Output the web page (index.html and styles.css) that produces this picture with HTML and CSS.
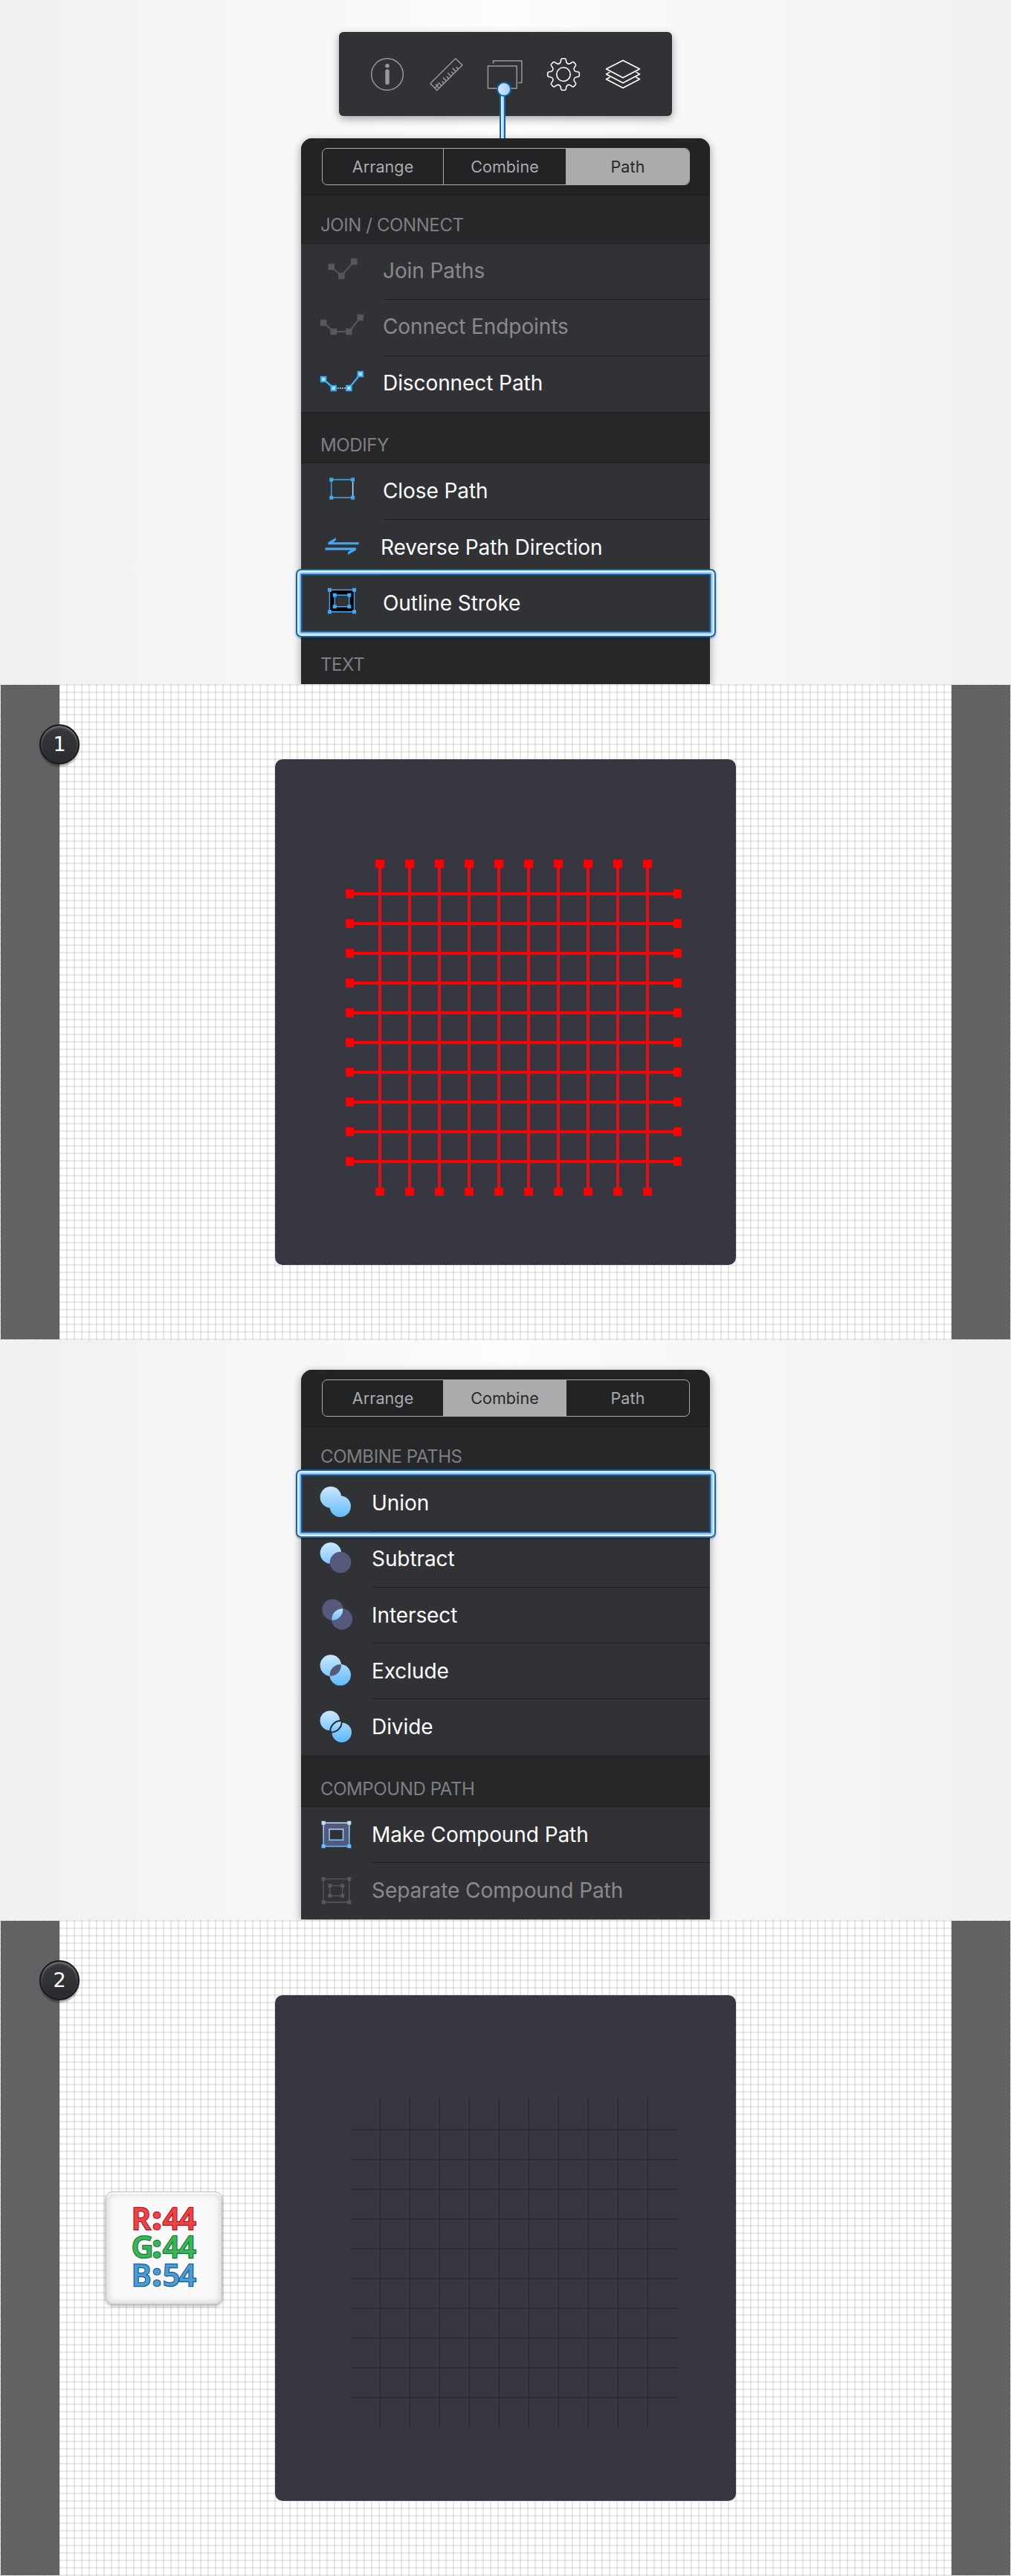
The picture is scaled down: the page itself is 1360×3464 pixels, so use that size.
FILE: index.html
```html
<!DOCTYPE html>
<html lang="en">
<head>
<meta charset="utf-8">
<title>Outline Stroke and Union</title>
<link rel="stylesheet" href="styles.css">
</head>
<body>
<svg class="defs" aria-hidden="true">
  <defs>
    <linearGradient id="sky" gradientUnits="userSpaceOnUse" x1="0" y1="15" x2="0" y2="56">
      <stop offset="0" stop-color="#cbe8ff"/><stop offset="1" stop-color="#62bbfb"/>
    </linearGradient>
    <linearGradient id="lens" gradientUnits="userSpaceOnUse" x1="0" y1="28" x2="0" y2="45">
      <stop offset="0" stop-color="#bfe4ff"/><stop offset="1" stop-color="#6bbffb"/>
    </linearGradient>
    <path id="tooth" d="M-5.930 -14.300Q-4.200 -15.200 -3.800 -17L-3.300 -19.800Q-3 -21.300 -1.800 -21.300H1.800Q3 -21.300 3.300 -19.800L3.800 -17Q4.200 -15.200 5.930 -14.300"/>
  </defs>
</svg>

<section class="stage stage-path">
  <div class="toolbar">
    <svg class="tool dim" viewBox="496.5 75.5 48 48">
      <circle cx="520.5" cy="99.5" r="21.3"/>
      <circle class="solid" cx="520.5" cy="88" r="2.8"/>
      <rect class="solid" x="517.8" y="92.8" width="5.4" height="20.4" rx="2"/>
    </svg>
    <svg class="tool dim" viewBox="575.8 75.5 48 48">
      <path d="M612.5 78.2L621.8 87L587.6 121L578.7 111.8Z"/>
      <path d="M585 117.500l4.500-5M588.500 115l-2.500-2.500M590.500 118l-2.800-2.800M593.800 114.800l-4.500-4.500M597 111.600l-2.800-2.800M600.200 108.400l-4.500-4.500M603.400 105.200l-2.800-2.800M606.600 102l-4.500-4.500M609.800 98.800l-2.800-2.800M613 95.600l-4.500-4.500M616.200 92.400l-2.800-2.800"/>
    </svg>
    <svg class="tool dim" viewBox="655.1 75.500 48 48">
      <path d="M656.500 88.300H695.300V118.200H656.500ZM663.500 85V81.200H702V110.700H697.300"/>
    </svg>
    <svg class="tool lit" viewBox="-24 -24 48 48">
      <circle r="9.200"/>
      <use href="#tooth"/><use href="#tooth" transform="rotate(45)"/><use href="#tooth" transform="rotate(90)"/><use href="#tooth" transform="rotate(135)"/><use href="#tooth" transform="rotate(180)"/><use href="#tooth" transform="rotate(225)"/><use href="#tooth" transform="rotate(270)"/><use href="#tooth" transform="rotate(315)"/>
    </svg>
    <svg class="tool lit" viewBox="813.500 75.500 48 48">
      <path d="M837.500 80.800L860 92.300L837.500 104L815 92.300Z"/>
      <path d="M820 96.400L815 99.200L837.500 111L860 99.200L855 96.400M820 103.300L815 106L837.500 117.800L860 106L855 103.300"/>
    </svg>
  </div>

  <div class="panel">
    <div class="tabbar"><div class="tabs">
      <span>Arrange</span><span>Combine</span><span class="on">Path</span>
    </div></div>
    <h2>JOIN / CONNECT</h2>
    <ul>
      <li class="off">
        <svg class="ico node-off" viewBox="0 0 110 75"><path d="M40.700 30.700L54.200 43L71.200 23.700"/><path class="dots" d="M36.500 26.500h8.500v8.500h-8.500zM50 38.800h8.500v8.500h-8.500zM67 19.500h8.500v8.500h-8.500z"/></svg>
        <span>Join Paths</span></li>
      <li class="off">
        <svg class="ico node-off" viewBox="0 0 110 75"><path d="M30.100 31L43.700 43H64.400L79.800 24"/><path class="dots" d="M25.900 26.800h8.500v8.500h-8.500zM39.500 38.800h8.500v8.500h-8.500zM60.200 38.800h8.500v8.500h-8.500zM75.500 19.800h8.500v8.500h-8.500z"/></svg>
        <span>Connect Endpoints</span></li>
      <li>
        <svg class="ico node-on" viewBox="0 0 110 75"><path d="M30.100 31L43.700 43M64.400 43L79.800 24"/><path class="gap" d="M49 43H60"/><path class="ends" d="M26.800 27.700h6.600v6.600h-6.600zM40.400 39.700h6.600v6.600h-6.600zM61.100 39.700h6.600v6.600h-6.600zM76.500 20.700h6.600v6.600h-6.600z"/></svg>
        <span>Disconnect Path</span></li>
    </ul>
    <h2 class="mid">MODIFY</h2>
    <ul class="low">
      <li>
        <svg class="ico box-on" viewBox="0 0 110 75"><path d="M40.700 22H69.600V46.300H40.700Z"/><path class="pale" d="M69.600 25V43.500"/><path class="dots" d="M38.200 19.500h5v5h-5zM67.100 19.500h5v5h-5zM38.200 43.800h5v5h-5zM67.100 43.800h5v5h-5z"/></svg>
        <span>Close Path</span></li>
      <li class="wide">
        <svg class="ico box-on" viewBox="0 0 110 75"><path class="dots" d="M36.500 30.200L46.800 24V27.500L43 30.200H77.500V33.300H36.500ZM74 40.700L63 47V43.500L67 40.700H32.400V37.600H74Z"/></svg>
        <span>Reverse Path Direction</span></li>
      <li>
        <svg class="ico box-on" viewBox="0 0 110 75"><path class="ring" fill-rule="evenodd" d="M38.400 19.300H71.500V48.700H38.400ZM45.200 26.300V41.700H64.800V26.300Z"/><path class="dots" d="M35.900 16.800h5v5h-5zM69 16.800h5v5h-5zM35.900 46.200h5v5h-5zM69 46.200h5v5h-5zM42.700 23.800h5v5h-5zM62.300 23.800h5v5h-5zM42.700 39.200h5v5h-5zM62.300 39.200h5v5h-5z"/></svg>
        <span>Outline Stroke</span></li>
    </ul>
    <h2 class="mid last">TEXT</h2>
    <div class="highlight"></div>
  </div>
  <div class="pin"></div>
</section>

<section class="canvas">
  <div class="margin"></div>
  <div class="paper">
    <div class="tile">
      <svg viewBox="370 1021 620 680">
        <path class="r-v" d="M511 1162V1602M551 1162V1602M591 1162V1602M631 1162V1602M671 1162V1602M711 1162V1602M751 1162V1602M791 1162V1602M831 1162V1602M871 1162V1602"/>
        <path class="r-h" d="M470 1202H912M470 1242H912M470 1282H912M470 1322H912M470 1362H912M470 1402H912M470 1442H912M470 1482H912M470 1522H912M470 1562H912"/>
        <path class="r-end-h" d="M465 1202H476M465 1242H476M465 1282H476M465 1322H476M465 1362H476M465 1402H476M465 1442H476M465 1482H476M465 1522H476M465 1562H476M906 1202H917M906 1242H917M906 1282H917M906 1322H917M906 1362H917M906 1402H917M906 1442H917M906 1482H917M906 1522H917M906 1562H917"/>
        <path class="r-end-h" d="M511 1156V1167M551 1156V1167M591 1156V1167M631 1156V1167M671 1156V1167M711 1156V1167M751 1156V1167M791 1156V1167M831 1156V1167M871 1156V1167M511 1597V1608M551 1597V1608M591 1597V1608M631 1597V1608M671 1597V1608M711 1597V1608M751 1597V1608M791 1597V1608M831 1597V1608M871 1597V1608"/>
      </svg>
    </div>
  </div>
  <div class="margin"></div>
  <div class="badge">1</div>
</section>

<section class="stage stage-combine">
  <div class="panel narrow">
    <div class="tabbar"><div class="tabs">
      <span>Arrange</span><span class="on">Combine</span><span>Path</span>
    </div></div>
    <h2>COMBINE PATHS</h2>
    <ul class="low">
      <li>
        <svg class="ico" viewBox="0 0 95 75"><g fill="url(#sky)"><circle cx="39.900" cy="29.300" r="14.300"/><circle cx="52.700" cy="41.700" r="14.300"/></g></svg>
        <span>Union</span></li>
      <li>
        <svg class="ico" viewBox="0 0 95 75"><circle cx="39.900" cy="29.500" r="14.300" fill="url(#sky)"/><circle cx="53" cy="42" r="14.300" fill="#55597b"/></svg>
        <span>Subtract</span></li>
      <li>
        <svg class="ico" viewBox="0 0 95 75"><g fill="#55597b"><circle cx="42.600" cy="29.600" r="14.200"/><circle cx="55" cy="42.300" r="14.200"/></g><path fill="url(#lens)" d="M56.200 28.200A14.200 14.200 0 0 1 41.400 43.700A14.200 14.200 0 0 1 56.200 28.200Z"/></svg>
        <span>Intersect</span></li>
      <li>
        <svg class="ico" viewBox="0 0 95 75"><g fill="url(#sky)"><circle cx="39.900" cy="29.600" r="14.300"/><circle cx="52.700" cy="42.300" r="14.300"/></g><path fill="#55597b" d="M53.900 28.200A14.200 14.200 0 0 1 38.700 43.700A14.200 14.200 0 0 1 53.900 28.200Z"/></svg>
        <span>Exclude</span></li>
      <li>
        <svg class="ico" viewBox="0 0 95 75"><g fill="url(#sky)"><circle cx="38.800" cy="28.700" r="13.200"/><circle cx="54.700" cy="44.700" r="13.200"/></g><path fill="url(#lens)" stroke="#1f2c39" stroke-width="2" d="M54.600 29.200A14 14 0 0 1 39.300 44.400A14 14 0 0 1 54.600 29.200Z"/></svg>
        <span>Divide</span></li>
    </ul>
    <h2 class="mid">COMPOUND PATH</h2>
    <ul class="low">
      <li>
        <svg class="ico" viewBox="0 0 95 75"><path fill="#55597b" fill-rule="evenodd" stroke="url(#sky)" stroke-width="1.500" d="M30.100 21.300H64.800V52.700H30.100ZM38 29.700V44.300H56.500V29.700Z"/><path fill="url(#sky)" d="M27.600 18.800h5v5h-5zM62.300 18.800h5v5h-5zM27.600 50.200h5v5h-5zM62.300 50.200h5v5h-5z"/></svg>
        <span>Make Compound Path</span></li>
      <li class="off">
        <svg class="ico comp-off" viewBox="0 0 95 75"><path d="M30.100 21.700H64.800V53H30.100ZM38.800 30.700V44.300H55.700V30.700Z"/><path class="dots" d="M27.600 19.200h5v5h-5zM62.300 19.200h5v5h-5zM27.600 50.500h5v5h-5zM62.300 50.500h5v5h-5zM36.300 28.200h5v5h-5zM53.200 28.200h5v5h-5zM36.300 41.800h5v5h-5zM53.200 41.800h5v5h-5z"/></svg>
        <span>Separate Compound Path</span></li>
    </ul>
    <div class="highlight"></div>
  </div>
</section>

<section class="canvas">
  <div class="margin"></div>
  <div class="paper">
    <div class="tile">
      <svg viewBox="370 1021 620 680">
        <path class="g-soft" d="M508.500 1160V1602M548.500 1160V1602M588.500 1160V1602M628.500 1160V1602M668.500 1160V1602M708.500 1160V1602M748.500 1160V1602M788.500 1160V1602M828.500 1160V1602M868.500 1160V1602"/>
        <path class="g-line" d="M511 1160V1602M551 1160V1602M591 1160V1602M631 1160V1602M671 1160V1602M711 1160V1602M751 1160V1602M791 1160V1602M831 1160V1602M871 1160V1602M470 1202H912M470 1242H912M470 1282H912M470 1322H912M470 1362H912M470 1402H912M470 1442H912M470 1482H912M470 1522H912M470 1562H912"/>
      </svg>
    </div>
  </div>
  <div class="margin"></div>
  <div class="badge">2</div>
  <div class="swatch">
    <div class="red">R<i>:</i>44</div>
    <div class="green">G<i>:</i>44</div>
    <div class="blue">B<i>:</i>54</div>
  </div>
</section>
</body>
</html>
```
FILE: styles.css
```css
* { box-sizing: border-box; }
body { margin: 0; width: 1360px; font-family: Inter, "Liberation Sans", sans-serif; background: #fff; }
h2, ul { margin: 0; padding: 0; font-weight: 400; list-style: none; }
.defs { position: absolute; width: 0; height: 0; }

/* Menu stages */
.stage {
  position: relative;
  display: flex;
  flex-direction: column;
  align-items: center;
  overflow: hidden;
  background: linear-gradient(90deg, #f0f0f0 0, #f8f8f8 32%, #fdfdfd 50%, #f8f8f8 68%, #f0f0f0 100%);
}
.stage-path { height: 920px; padding-top: 43px; gap: 30px; }
.stage-combine { height: 780px; padding-top: 40px; }

.toolbar {
  flex: none;
  width: 448px;
  height: 113px;
  padding-left: 40.5px;
  display: flex;
  align-items: center;
  gap: 31.3px;
  border-radius: 6px;
  background: #313235;
  box-shadow: 0 4px 12px rgba(0, 0, 0, .35);
}
.tool { width: 48px; height: 48px; flex: none; fill: none; stroke-width: 1.5; stroke-linejoin: round; }
.dim { stroke: #98989b; }
.dim .solid { fill: #98989b; stroke: none; }
.lit { stroke: #fff; stroke-width: 1.6; }

.pin {
  position: absolute;
  left: 672px;
  top: 119px;
  width: 8px;
  height: 67px;
  background: linear-gradient(90deg, #0f67ab 0 2px, #e2f0ff 2px 4px, #a9cffb 4px 6px, #0f67ab 6px);
}
.pin::before {
  content: "";
  position: absolute;
  left: -4px;
  top: -9px;
  width: 16px;
  height: 16px;
  border: 2px solid #0f67ab;
  border-radius: 50%;
  background: linear-gradient(90deg, #d0e5ff, #a9cffb);
}

.panel {
  position: relative;
  flex: none;
  width: 550px;
  border-radius: 15px 15px 0 0;
  background: #313235;
  box-shadow: 0 3px 12px rgba(0, 0, 0, .38);
}
.tabbar {
  height: 76px;
  padding: 13px 27px 0 28px;
  border-radius: 15px 15px 0 0;
  background: #222325;
}
.tabs {
  height: 50px;
  display: grid;
  grid-template-columns: 162px 165px 1fr;
  border: 1.5px solid #ababab;
  border-radius: 7px;
  overflow: hidden;
  font-size: 21.5px;
  letter-spacing: .1px;
  line-height: 48px;
  text-align: center;
  color: #ababab;
}
.tabs span + span { border-left: 1.5px solid #ababab; }
.tabs .on { background: #ababab; color: #28292b; }

.panel h2 {
  height: 66px;
  padding: 15px 26px 0;
  border-top: 1px solid #1c1d1f;
  border-bottom: 1px solid #1c1d1f;
  background: #262729;
  color: #7f7f81;
  font-size: 24px;
  line-height: 50px;
  letter-spacing: -.4px;
}
.panel h2.mid { height: 69.5px; padding-top: 19px; }
.panel h2.last { height: 71px; border-bottom: 0; }
.panel li {
  height: 75.33px;
  display: flex;
  color: #fff;
  font-size: 28px;
  letter-spacing: -.08px;
  line-height: 72px;
  white-space: nowrap;
}
.panel .low li { line-height: 74px; }
.panel li > span { flex: 1; height: 100%; border-bottom: 1px solid #1f2023; }
.panel li:last-child > span { border-bottom: 0; }
.panel li.off { color: #8a8a8d; }
.panel li.wide > span { text-indent: -3px; }
.ico { flex: none; width: 110px; height: 75px; fill: none; }
.narrow .ico { width: 95px; }

.node-off path { stroke: #58585a; stroke-width: 2; }
.node-off .dots, .comp-off .dots { fill: #58585a; stroke: none; }
.comp-off path { stroke: #58585a; stroke-width: 1.3; }
.node-on path { stroke: #3fa9f5; stroke-width: 2.4; }
.node-on .gap { stroke: #fff; stroke-width: 1.5; stroke-dasharray: 1.5 1.6; }
.node-on .ends { fill: #a5e6ff; stroke: #35a8f2; stroke-width: 2; }
.box-on path { stroke: #3fa9f5; stroke-width: 1.4; }
.box-on .pale { stroke: #a8dcf8; }
.box-on .ring { fill: #000; }
.box-on .dots { fill: #3fa9f5; stroke: none; }

.highlight {
  position: absolute;
  left: -7px;
  width: 565px;
  height: 92px;
  border: 2px solid #1768ab;
  border-radius: 7px;
  box-shadow:
    inset 0 0 0 2px #e2f1ff,
    inset 0 0 0 4.5px #a9d0fa,
    inset 0 0 0 6.5px #1768ab,
    0 1px 3px rgba(0, 0, 0, .4);
}
.stage-path .highlight { top: 579px; }
.stage-combine .highlight { top: 134px; }

/* Drawing canvases */
.canvas {
  position: relative;
  height: 882px;
  display: flex;
  padding: 1px;
  background:
    repeating-linear-gradient(90deg, rgba(0, 0, 0, .085) 0 1px, transparent 1px 9px, rgba(0, 0, 0, .085) 9px 10px),
    repeating-linear-gradient(180deg, rgba(0, 0, 0, .085) 0 2px, transparent 2px 10px),
    #fff;
}
.margin { width: 79px; background: #616264; }
.paper { flex: 1; padding: 100px 0 0 290px; }
.tile { width: 620px; height: 680px; border-radius: 10px; background: #373742; overflow: hidden; }
.tile svg { display: block; width: 620px; height: 680px; fill: none; }
.r-v { stroke: #e30e13; stroke-width: 4; }
.r-h { stroke: #f00; stroke-width: 4; }
.r-end-h { stroke: #f00; stroke-width: 12; }
.g-line { stroke: #2c2c36; stroke-width: 2; }
.g-soft { stroke: #3b3b46; stroke-width: 2; }

.badge {
  position: absolute;
  left: 53px;
  top: 54px;
  width: 54px;
  height: 54px;
  border: 2px solid #17181a;
  border-radius: 50%;
  background: linear-gradient(#38393c, #2a2b2f);
  box-shadow: inset 0 2px 3px rgba(255, 255, 255, .35), 0 3px 2px rgba(0, 0, 0, .3);
  color: #fff;
  font: 27px/50px "DejaVu Sans", sans-serif;
  text-align: center;
}

/* Colour value card */
.swatch {
  position: absolute;
  left: 142px;
  top: 365px;
  width: 157px;
  height: 152px;
  padding: 16px 0 0 34px;
  border: 1px solid #bebebe;
  border-radius: 10px;
  background: #fafafa;
  box-shadow: inset 0 2px 1px #fff, inset 0 0 8px 3px rgba(0, 0, 0, .13), 0 2px 4px rgba(0, 0, 0, .3);
  font: 600 40px/38px "Open Sans", sans-serif;
  letter-spacing: -1.2px;
  -webkit-text-stroke: 2.4px;
  paint-order: stroke fill;
}
.swatch div { height: 38px; display: grid; grid-template-columns: 25px 17px 1fr; }
.swatch i { font-style: normal; font-weight: 800; text-align: center; }
.red { color: #f04347; -webkit-text-stroke-color: #ad151b; }
.green { color: #3bb557; -webkit-text-stroke-color: #137a38; }
.blue { color: #4d9bd3; -webkit-text-stroke-color: #175c94; }
```
